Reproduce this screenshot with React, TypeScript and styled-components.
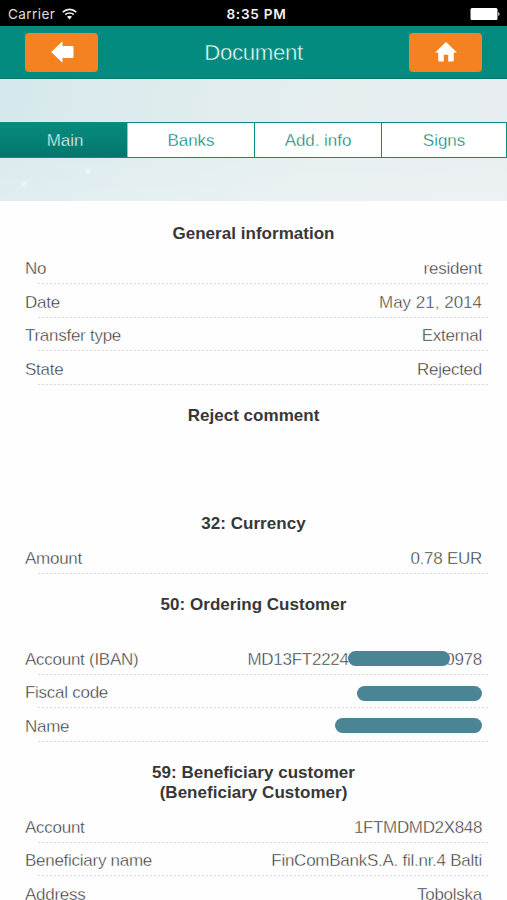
import React from "react";
import styled, { createGlobalStyle } from "styled-components";

const GlobalStyle = createGlobalStyle`
  * { box-sizing: border-box; }
  html, body { margin: 0; padding: 0; background: #fff; overflow: hidden; }
  body { font-family: "Liberation Sans", Arial, Helvetica, sans-serif; }
`;

const Screen = styled.div`
  width: 507px;
  height: 900px;
  overflow: hidden;
  display: flex;
  flex-direction: column;
  background: #fefefe;
`;

const StatusBar = styled.div`
  flex: none;
  height: 26px;
  padding: 2px 7px 0 8px;
  background: #000;
  color: #dedede;
  display: grid;
  grid-template-columns: 1fr auto 1fr;
  align-items: center;
  font-family: Inter, "Liberation Sans", sans-serif;
  font-size: 13.6px;
  letter-spacing: 0.4px;
  line-height: 24px;
`;

const Carrier = styled.div`
  display: flex;
  align-items: center;
  gap: 7px;
`;

const Clock = styled.div`
  color: #f2f2f2;
  font-weight: 600;
  font-size: 13.6px;
  letter-spacing: 0.75px;
  padding-left: 5px;
`;

const BatterySlot = styled.div`
  display: flex;
  justify-content: flex-end;
`;

const NavBar = styled.header`
  flex: none;
  height: 53px;
  padding: 0 25px;
  background: #028b7e;
  border-bottom: 1px solid #08786d;
  display: flex;
  align-items: center;
  justify-content: space-between;
`;

const NavButton = styled.button`
  width: 73px;
  height: 39px;
  padding: 0 0 0 1px;
  border: 0;
  border-radius: 4px;
  background: #f58220;
  display: flex;
  align-items: center;
  justify-content: center;
`;

const Title = styled.h1`
  margin: 0;
  padding-top: 2px;
  font-size: 22.3px;
  font-weight: 400;
  line-height: 30px;
  letter-spacing: -0.37px;
  color: #f2fffd;
  -webkit-text-stroke: 0.5px #028b7e;
`;

const TabArea = styled.div`
  flex: none;
  height: 122px;
  padding-top: 43px;
  background:
    radial-gradient(circle at 24px 105px, #effafa 0, rgba(239, 250, 250, 0) 4px),
    radial-gradient(circle at 88px 92px, #effafa 0, rgba(239, 250, 250, 0) 4px),
    linear-gradient(rgba(255, 255, 255, 0) 30%, rgba(255, 255, 255, 0.22)),
    linear-gradient(97deg, #d6e8ec 0%, #dfecee 35%, #e6eef0 65%, #e7edf0 100%);
`;

const Tabs = styled.nav`
  height: 36px;
  display: grid;
  grid-template-columns: 128px 127px 127px 125px;
  grid-template-rows: 34px;
  border: solid #0b8c80;
  border-width: 1px 0;
`;

const Tab = styled.button<{ $active?: boolean }>`
  border: 0;
  border-right: 1px solid ${(p) => (p.$active ? "#8cc9c3" : "#0b8c80")};
  padding: 1px 0 0 ${(p) => (p.$active ? 3 : 0)}px;
  background: ${(p) =>
    p.$active ? "linear-gradient(#078a7d, #058276 50%, #04756a)" : "#fff"};
  color: ${(p) => (p.$active ? "#effcfa" : "#007f70")};
  font: 400 17px/33px "Liberation Sans", Arial, sans-serif;
  letter-spacing: -0.05px;
  -webkit-text-stroke: 0.35px ${(p) => (p.$active ? "#058175" : "#fff")};
`;

const Details = styled.main`
  flex: 1;
  min-height: 0;
  overflow: hidden;
  padding-top: 2.6px;
`;

const SectionTitle = styled.h2<{ $trailing?: number }>`
  margin: 0;
  padding: 20.7px 0 ${(p) => 5.9 + (p.$trailing ?? 0)}px;
  text-align: center;
  white-space: pre-line;
  font-size: 17px;
  font-weight: 700;
  line-height: 20.3px;
  letter-spacing: 0.03px;
  color: #373737;
`;

const Row = styled.div`
  height: 33.65px;
  padding: 3.6px 25px 0;
  display: flex;
  align-items: center;
  justify-content: space-between;
  font-size: 17px;
  line-height: 30px;
  letter-spacing: -0.27px;
  color: #303030;
  -webkit-text-stroke: 0.4px #fefefe;
  background: repeating-linear-gradient(90deg, #dcdcdc 0 2px, #fafafa 2px 4px)
    38px 100% / 450px 1px no-repeat;
`;

const Value = styled.span<{ $tracking?: number }>`
  display: flex;
  align-items: center;
  letter-spacing: ${(p) => p.$tracking ?? -0.26}px;
`;

const Redaction = styled.span<{ $width: number; $shift?: number; $overlap?: number }>`
  width: ${(p) => p.$width}px;
  height: 15px;
  margin-right: ${(p) => -(p.$overlap ?? 0)}px;
  margin-left: ${(p) => (p.$overlap ? -0.5 : 0)}px;
  border-radius: 8px;
  background: #4b8495;
  position: relative;
  top: ${(p) => p.$shift ?? 0}px;
`;

const WifiIcon = () => (
  <svg width="15" height="12" viewBox="0 0 15 12" fill="none" stroke="#eee" strokeWidth="1.7">
    <path d="M.8 4.2C4.5.5 10.5.5 14.2 4.2" />
    <path d="M3.2 6.7c2.4-2.3 6.2-2.3 8.6 0" />
    <path d="M5 8.8c1.4-1.3 3.6-1.3 5 0L7.5 11.4z" fill="#eee" stroke="none" />
  </svg>
);

const BatteryIcon = () => (
  <svg width="30" height="13" viewBox="0 0 30 13" fill="#fff">
    <rect x=".5" y="0" width="27" height="12" rx="1.5" />
    <path d="M28.3 4c1.6.5 1.6 3.5 0 4z" />
  </svg>
);

const BackIcon = () => (
  <svg width="23" height="22" viewBox="0 0 23 22" fill="#fff">
    <path d="M.2 11 11.5.2V5h9.8q1.2 0 1.2 1.2v9.6q0 1.2-1.2 1.2h-9.8v4.8z" />
  </svg>
);

const HomeIcon = () => (
  <svg width="22" height="20" viewBox="0 0 22 20" fill="#fff">
    <path d="M11 0 0 10.6h3.2v7.6q0 1.3 1.3 1.3h4.3v-6.7h4.4v6.7h4.3q1.3 0 1.3-1.3v-7.6H22z" />
  </svg>
);

interface FieldProps {
  label: string;
  tracking?: number;
  children: React.ReactNode;
}

const Field = ({ label, tracking, children }: FieldProps) => (
  <Row>
    <span>{label}</span>
    <Value $tracking={tracking}>{children}</Value>
  </Row>
);

const CommentSpace = styled.div`
  height: 61.5px;
`;

export default function App() {
  return (
    <Screen>
      <GlobalStyle />
      <StatusBar>
        <Carrier>
          Carrier
          <WifiIcon />
        </Carrier>
        <Clock>8:35 PM</Clock>
        <BatterySlot>
          <BatteryIcon />
        </BatterySlot>
      </StatusBar>
      <NavBar>
        <NavButton aria-label="Back">
          <BackIcon />
        </NavButton>
        <Title>Document</Title>
        <NavButton aria-label="Home">
          <HomeIcon />
        </NavButton>
      </NavBar>
      <TabArea>
        <Tabs>
          <Tab $active>Main</Tab>
          <Tab>Banks</Tab>
          <Tab>Add. info</Tab>
          <Tab>Signs</Tab>
        </Tabs>
      </TabArea>
      <Details>
        <SectionTitle>General information</SectionTitle>
        <Field label="No">resident</Field>
        <Field label="Date" tracking={0}>May 21, 2014</Field>
        <Field label="Transfer type">External</Field>
        <Field label="State">Rejected</Field>
        <SectionTitle>Reject comment</SectionTitle>
        <CommentSpace />
        <SectionTitle>32: Currency</SectionTitle>
        <Field label="Amount">0.78 EUR</Field>
        <SectionTitle $trailing={20.3}>50: Ordering Customer</SectionTitle>
        <Field label="Account (IBAN)">
          MD13FT2224
          <Redaction $width={102} $overlap={5} $shift={-1} />
          0978
        </Field>
        <Field label="Fiscal code">
          <Redaction $width={125} />
        </Field>
        <Field label="Name">
          <Redaction $width={147} $shift={-1} />
        </Field>
        <SectionTitle>{"59: Beneficiary customer\n(Beneficiary Customer)"}</SectionTitle>
        <Field label="Account" tracking={-0.35}>1FTMDMD2X848</Field>
        <Field label="Beneficiary name">FinComBankS.A. fil.nr.4 Balti</Field>
        <Field label="Address">Tobolska</Field>
      </Details>
    </Screen>
  );
}
